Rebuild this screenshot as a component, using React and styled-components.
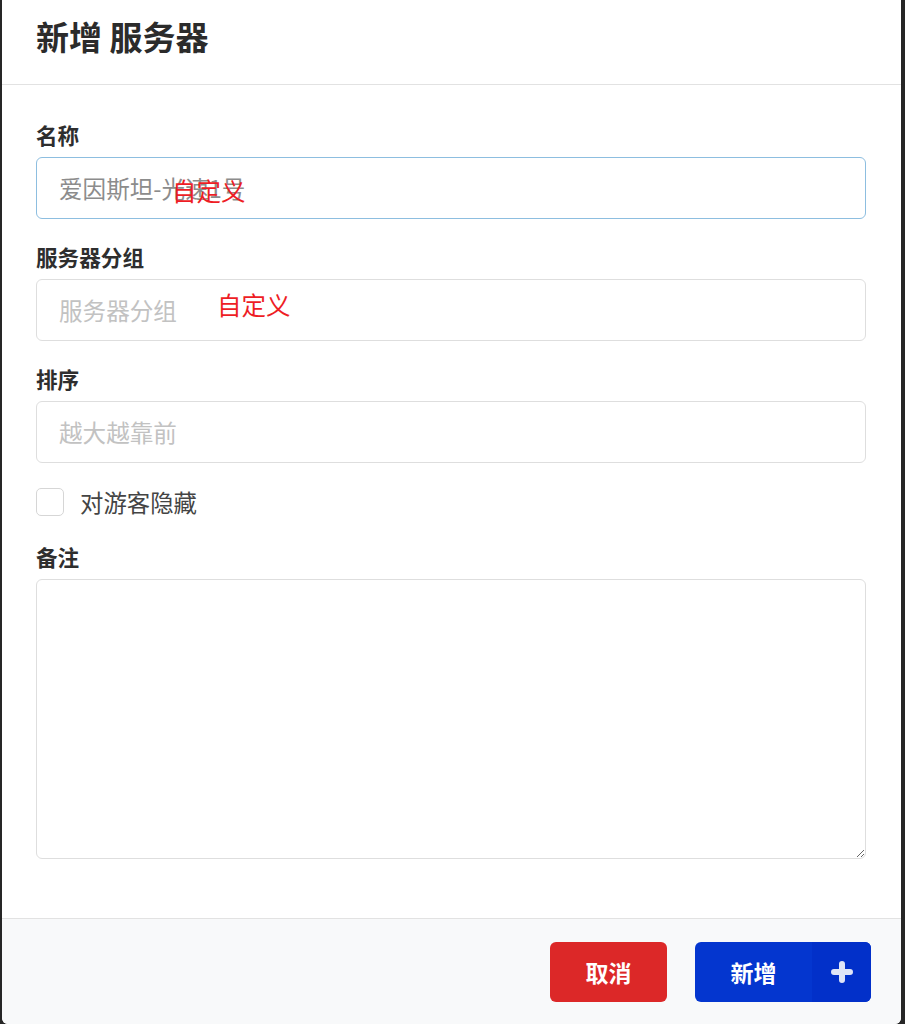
import React from 'react'
import styled, {createGlobalStyle} from 'styled-components'

const GlobalStyle = createGlobalStyle`
  html, body {
    margin: 0;
    padding: 0;
    background: #262626;
    font-family: "Noto Sans CJK SC", "Noto Sans", "Liberation Sans", sans-serif;
  }
  * {
    box-sizing: border-box;
  }
`

const fields = [
  {label: '名称', placeholder: '爱因斯坦-光速1号', dark: true, focused: true, note: {left: 136, top: 18}},
  {label: '服务器分组', placeholder: '服务器分组', note: {left: 181, top: 10}},
  {label: '排序', placeholder: '越大越靠前'},
]

const App = () => {
  return (
    <>
      <GlobalStyle />
      <Modal>
        <Header>
          <Title>新增 服务器</Title>
        </Header>
        <Body>
          {fields.map(f => (
            <Field key={f.label}>
              <Label>{f.label}</Label>
              <InputWrap>
                <Input placeholder={f.placeholder} $dark={f.dark} $focused={f.focused} />
                {f.note && <Note $left={f.note.left} $top={f.note.top}>自定义</Note>}
              </InputWrap>
            </Field>
          ))}
          <CheckRow>
            <CheckBox type='checkbox' />
            <CheckLabel>对游客隐藏</CheckLabel>
          </CheckRow>
          <Field>
            <Label>备注</Label>
            <TextArea />
          </Field>
        </Body>
        <Footer>
          <CancelButton>取消</CancelButton>
          <AddButton>
            <AddText>新增</AddText>
            <AddIcon>
              <svg width='22' height='22' viewBox='0 0 22 22'>
                <path d='M11 3v16M3 11h16' stroke='#dfe5f7' strokeWidth='6' strokeLinecap='round' />
              </svg>
            </AddIcon>
          </AddButton>
        </Footer>
      </Modal>
    </>
  )
}

const Modal = styled.div`
  display: flex;
  flex-direction: column;
  width: 899px;
  height: 1024px;
  margin-left: 2px;
  background: #ffffff;
  border-radius: 0 0 6px 6px;
  overflow: hidden;
`

const Header = styled.div`
  height: 85px;
  padding: 14px 34px 0;
  border-bottom: 1px solid #e2e2e2;
`

const Title = styled.h2`
  margin: 0;
  font-size: 33px;
  line-height: 44px;
  font-weight: 700;
  color: #2b2b2b;
`

const Body = styled.div`
  flex: 1;
  display: flex;
  flex-direction: column;
  padding: 38px 35px 0 34px;
`

const Field = styled.div`
  display: flex;
  flex-direction: column;
  margin-bottom: 26px;
`

const Label = styled.label`
  font-size: 21.6px;
  line-height: 24px;
  font-weight: 700;
  color: #2e2e2e;
  margin-bottom: 10px;
`

const InputWrap = styled.div`
  position: relative;
`

const Input = styled.input`
  display: block;
  width: 100%;
  height: 62px;
  padding: 0 22px;
  font-family: inherit;
  font-size: 23.6px;
  color: #333;
  background: #fff;
  border: 1px solid ${({$focused}) => ($focused ? '#8dbee0' : '#dedede')};
  border-radius: 6px;
  outline: none;

  &::placeholder {
    color: ${({$dark}) => ($dark ? '#8c8c8c' : '#c2c2c2')};
  }
`

const Note = styled.span`
  position: absolute;
  left: ${({$left}) => $left}px;
  top: ${({$top}) => $top}px;
  font-size: 24.5px;
  line-height: 32px;
  color: #ee1d25;
  pointer-events: none;
`

const CheckRow = styled.div`
  display: flex;
  align-items: center;
  gap: 16px;
  margin: -2px 0 28px;
  height: 30px;
`

const CheckBox = styled.input`
  appearance: none;
  width: 28px;
  height: 28px;
  margin: 0;
  border: 1px solid #d6d6d6;
  border-radius: 5px;
  background: #fff;
`

const CheckLabel = styled.span`
  font-size: 23.4px;
  line-height: 30px;
  color: #444;
`

const TextArea = styled.textarea`
  display: block;
  width: 100%;
  height: 280px;
  padding: 12px 22px;
  font-family: inherit;
  font-size: 20px;
  border: 1px solid #dedede;
  border-radius: 6px;
  resize: vertical;
  outline: none;
`

const Footer = styled.div`
  display: flex;
  justify-content: flex-end;
  align-items: flex-start;
  gap: 28px;
  height: 106px;
  padding: 23px 30px 0 0;
  background: #f8f9fa;
  border-top: 1px solid #e2e2e2;
`

const CancelButton = styled.button`
  width: 117px;
  height: 60px;
  border: none;
  border-radius: 6px;
  background: #dc2828;
  color: #fff;
  font-family: inherit;
  font-size: 23px;
  font-weight: 700;
`

const AddButton = styled.button`
  display: flex;
  width: 176px;
  height: 60px;
  padding: 0;
  border: none;
  border-radius: 6px;
  overflow: hidden;
  background: #0436cf;
  color: #fff;
  font-family: inherit;
  font-size: 23px;
  font-weight: 700;
`

const AddText = styled.span`
  display: flex;
  align-items: center;
  justify-content: center;
  width: 117px;
  height: 100%;
`

const AddIcon = styled.span`
  display: flex;
  align-items: center;
  justify-content: center;
  flex: 1;
  height: 100%;
  background: #0230c9;
`

export default App
